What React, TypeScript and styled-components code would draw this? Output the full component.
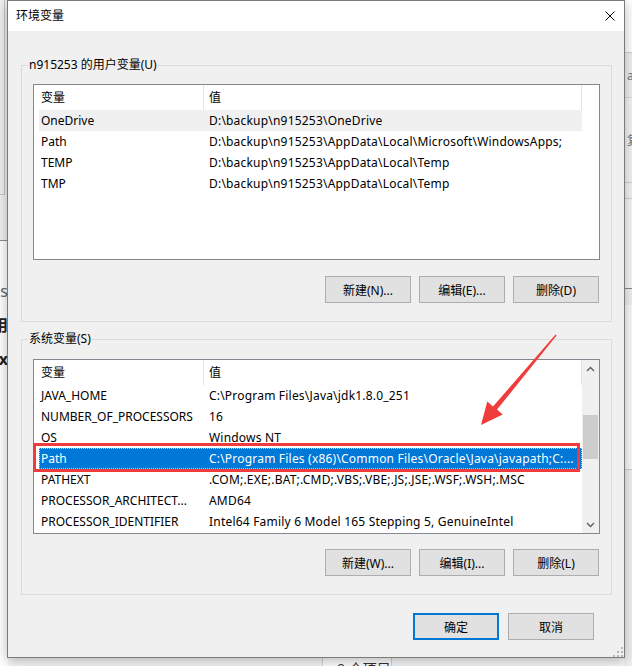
import React from 'react';
import styled, { createGlobalStyle, css } from 'styled-components';

const GlobalStyle = createGlobalStyle`
  html, body { margin: 0; padding: 0; background: #ffffff; }
  body {
    font-family: "Noto Sans", "Noto Sans CJK SC", sans-serif;
    font-size: 12px;
    color: #000;
  }
  * { box-sizing: border-box; }
`;

const Desktop = styled.div`
  position: relative;
  width: 632px;
  height: 666px;
  overflow: hidden;
  background: #f7f7f7;
`;

/* ---------- background windows (behind the dialog) ---------- */
const BackLeft = styled.div`
  position: absolute;
  left: 0;
  top: 0;
  width: 8px;
  height: 241px;
  background: #f0f0f0;
  border-bottom: 1px solid #8c8c8c;
`;
const BackLeftFrame = styled.div`
  width: 5px;
  height: 195px;
  border-right: 1px solid #c4c4c4;
  border-bottom: 1px solid #c4c4c4;
`;
const BackLeftText = styled.div`
  position: absolute;
  left: -30px;
  top: 241px;
  width: 38px;
  height: 425px;
  background: #ffffff;
  display: flex;
  flex-direction: column;
  align-items: flex-end;
  padding-top: 40px;
  gap: 14px;
`;
const BackGlyph = styled.span<{ $bold?: boolean }>`
  font-size: 16px;
  line-height: 20px;
  color: ${p => (p.$bold ? '#222' : '#666')};
  font-weight: ${p => (p.$bold ? 700 : 400)};
`;
const BackRight = styled.div`
  position: absolute;
  left: 624px;
  top: 0;
  width: 8px;
  height: 666px;
  display: flex;
  flex-direction: column;
  background: #f0f0f0;
`;
const BackBand = styled.div<{ $h: number; $bg: string; $line?: string }>`
  height: ${p => p.$h}px;
  background: ${p => p.$bg};
  border-bottom: 1px solid ${p => p.$line || 'transparent'};
  font-size: 12px;
  color: #777;
  padding-left: 3px;
  display: flex;
  align-items: center;
  overflow: hidden;
`;
const BackStatus = styled.div`
  position: absolute;
  left: 322px;
  top: 640px;
  width: 70px;
  height: 40px;
  background: #ffffff;
  border-left: 1px solid #d4d4d4;
  border-right: 1px solid #d4d4d4;
  padding: 21px 0 0 14px;
  font-size: 14px;
  line-height: 16px;
  color: #333;
  white-space: nowrap;
`;

/* ---------- dialog ---------- */
const Dialog = styled.div`
  position: absolute;
  left: 7px;
  top: 0;
  width: 618px;
  height: 658px;
  border: 1px solid #7a7a7a;
  background: #f0f0f0;
  box-shadow: 0 3px 12px rgba(0, 0, 0, 0.28);
  display: flex;
  flex-direction: column;
`;
const TitleBar = styled.div`
  height: 30px;
  flex: none;
  background: #ffffff;
  display: flex;
  align-items: center;
  justify-content: space-between;
  padding: 0 9px 0 8px;
`;
const Title = styled.span`
  font-size: 12px;
  line-height: 16px;
`;
const CloseIcon = styled.svg`
  width: 10px;
  height: 10px;
  display: block;
`;
const Body = styled.div`
  flex: 1;
  position: relative;
  display: flex;
  flex-direction: column;
  gap: 17px;
  padding: 34px 12px 16px 13px;
`;
const Group = styled.section<{ $pt: number }>`
  position: relative;
  border: 1px solid #dcdcdc;
  padding: ${p => p.$pt}px 11px 18px 11px;
  display: flex;
  flex-direction: column;
  gap: ${p => 34 - p.$pt}px;
`;
const GroupLabel = styled.span`
  position: absolute;
  top: -9px;
  left: 6px;
  padding: 0 1px;
  background: #f0f0f0;
  line-height: 16px;
  font-size: 12px;
`;
const List = styled.div<{ $h: number }>`
  position: relative;
  height: ${p => p.$h}px;
  border: 1px solid #828790;
  background: #ffffff;
  display: flex;
`;
const ListMain = styled.div`
  flex: 1;
  min-width: 0;
  display: flex;
  flex-direction: column;
`;
const Header = styled.div`
  height: 25px;
  flex: none;
  display: grid;
  grid-template-columns: 170px 1fr;
`;
const HeaderCell = styled.div<{ $pad: number }>`
  border-right: 1px solid #e5e5e5;
  padding-left: ${p => p.$pad}px;
  line-height: 25px;
`;
const Row = styled.div<{ $state?: 'hover' | 'selected' }>`
  position: relative;
  margin-left: 5px;
  height: 21px;
  line-height: 21px;
  display: grid;
  grid-template-columns: 170px 1fr;
  white-space: nowrap;
  ${p =>
    p.$state === 'hover' &&
    css`
      background: #f0f0f0;
    `}
  ${p =>
    p.$state === 'selected' &&
    css`
      background: #0078d7;
      color: #ffffff;
      outline: 1px dotted #f5c77e;
      outline-offset: -1px;
    `}
`;
const NameCell = styled.div`
  padding-left: 2px;
  overflow: hidden;
`;
const ValueCell = styled.div`
  overflow: hidden;
  letter-spacing: 0.2px;
`;
const ScrollGap = styled.div`
  width: 17px;
  flex: none;
`;
const ScrollBar = styled.div`
  width: 17px;
  flex: none;
  background: #f0f0f0;
  display: flex;
  flex-direction: column;
`;
const ScrollArrow = styled.div`
  height: 17px;
  flex: none;
  display: flex;
  align-items: center;
  justify-content: center;
`;
const ScrollTrack = styled.div`
  flex: 1;
  padding-top: 38px;
`;
const Thumb = styled.div`
  height: 44px;
  margin: 0 1px;
  background: #cdcdcd;
`;
const Annotation = styled.div`
  position: absolute;
  left: -1px;
  top: 83px;
  width: 547px;
  height: 29px;
  border: 3px solid #ef3b3b;
  pointer-events: none;
`;
const ButtonRow = styled.div<{ $pr: number }>`
  display: flex;
  justify-content: flex-end;
  gap: 8px;
  padding-right: ${p => p.$pr}px;
`;
const Footer = styled.div`
  display: flex;
  justify-content: flex-end;
  gap: 9px;
  padding-right: 18px;
  margin-top: 1px;
`;
const Button = styled.button<{ $primary?: boolean }>`
  width: 86px;
  height: 27px;
  margin: 0;
  padding: 0;
  font-family: inherit;
  font-size: 12px;
  color: #000;
  background: #e1e1e1;
  border: ${p => (p.$primary ? '2px solid #0078d7' : '1px solid #adadad')};
  border-radius: 0;
`;
const Grip = styled.svg`
  position: absolute;
  right: 1px;
  bottom: 0;
  width: 10px;
  height: 10px;
`;
const Overlay = styled.svg`
  position: absolute;
  left: 0;
  top: 0;
  width: 632px;
  height: 666px;
  pointer-events: none;
`;

type Item = { name: string; value: string; state?: 'hover' | 'selected' };

const userVars: Item[] = [
  { name: 'OneDrive', value: String.raw`D:\backup\n915253\OneDrive`, state: 'hover' },
  { name: 'Path', value: String.raw`D:\backup\n915253\AppData\Local\Microsoft\WindowsApps;` },
  { name: 'TEMP', value: String.raw`D:\backup\n915253\AppData\Local\Temp` },
  { name: 'TMP', value: String.raw`D:\backup\n915253\AppData\Local\Temp` },
];

const sysVars: Item[] = [
  { name: 'JAVA_HOME', value: String.raw`C:\Program Files\Java\jdk1.8.0_251` },
  { name: 'NUMBER_OF_PROCESSORS', value: '16' },
  { name: 'OS', value: 'Windows NT' },
  {
    name: 'Path',
    value: String.raw`C:\Program Files (x86)\Common Files\Oracle\Java\javapath;C:...`,
    state: 'selected',
  },
  { name: 'PATHEXT', value: '.COM;.EXE;.BAT;.CMD;.VBS;.VBE;.JS;.JSE;.WSF;.WSH;.MSC' },
  { name: 'PROCESSOR_ARCHITECT...', value: 'AMD64' },
  { name: 'PROCESSOR_IDENTIFIER', value: 'Intel64 Family 6 Model 165 Stepping 5, GenuineIntel' },
];

const Chevron = ({ up }: { up?: boolean }) => (
  <svg width="9" height="6" viewBox="0 0 9 6">
    <polyline
      points={up ? '1,5 4.5,1.5 8,5' : '1,1 4.5,4.5 8,1'}
      fill="none"
      stroke="#606060"
      strokeWidth="1.4"
    />
  </svg>
);

const VarList = ({ items, height, scroll, annotate }: { items: Item[]; height: number; scroll?: boolean; annotate?: boolean }) => (
  <List $h={height}>
    <ListMain>
      <Header>
        <HeaderCell $pad={7}>变量</HeaderCell>
        <HeaderCell $pad={5}>值</HeaderCell>
      </Header>
      {items.map(it => (
        <Row key={it.name + it.value} $state={it.state}>
          <NameCell>{it.name}</NameCell>
          <ValueCell>{it.value}</ValueCell>
        </Row>
      ))}
    </ListMain>
    {scroll ? (
      <ScrollBar>
        <ScrollArrow>
          <Chevron up />
        </ScrollArrow>
        <ScrollTrack>
          <Thumb />
        </ScrollTrack>
        <ScrollArrow>
          <Chevron />
        </ScrollArrow>
      </ScrollBar>
    ) : (
      <ScrollGap />
    )}
    {annotate && <Annotation />}
  </List>
);

export default function App() {
  return (
    <>
      <GlobalStyle />
      <Desktop>
        <BackLeft>
          <BackLeftFrame />
        </BackLeft>
        <BackLeftText>
          <BackGlyph>ls</BackGlyph>
          <BackGlyph $bold>用</BackGlyph>
          <BackGlyph $bold>x</BackGlyph>
        </BackLeftText>
        <BackRight>
          <BackBand $h={53} $bg="#ffffff" $line="#d0d0d0" />
          <BackBand $h={45} $bg="#f0f0f0" $line="#d8d8d8">a</BackBand>
          <BackBand $h={85} $bg="#f3f3f3" $line="#d0d0d0">复</BackBand>
          <BackBand $h={16} $bg="#f3f3f3" $line="#d0d0d0" />
          <BackBand $h={90} $bg="#f7f7f7" $line="#8a8a8a" />
          <BackBand $h={16} $bg="#f0f0f0" />
          <BackBand $h={165} $bg="#fafafa" $line="#d0d0d0" />
        </BackRight>
        <BackStatus>9 个项目</BackStatus>

        <Dialog>
          <TitleBar>
            <Title>环境变量</Title>
            <CloseIcon viewBox="0 0 10 10">
              <path d="M0.5 0.5 L9.5 9.5 M9.5 0.5 L0.5 9.5" stroke="#000" strokeWidth="1" fill="none" />
            </CloseIcon>
          </TitleBar>
          <Body>
            <Group $pt={18}>
              <GroupLabel>n915253 的用户变量(U)</GroupLabel>
              <VarList items={userVars} height={176} />
              <ButtonRow $pr={1}>
                <Button>新建(N)...</Button>
                <Button>编辑(E)...</Button>
                <Button>删除(D)</Button>
              </ButtonRow>
            </Group>
            <Group $pt={19}>
              <GroupLabel>系统变量(S)</GroupLabel>
              <VarList items={sysVars} height={175} scroll annotate />
              <ButtonRow $pr={1}>
                <Button>新建(W)...</Button>
                <Button>编辑(I)...</Button>
                <Button>删除(L)</Button>
              </ButtonRow>
            </Group>
            <Footer>
              <Button $primary>确定</Button>
              <Button>取消</Button>
            </Footer>
            <Grip viewBox="0 0 10 10">
              {[
                [8, 0],
                [8, 4],
                [4, 4],
                [8, 8],
                [4, 8],
                [0, 8],
              ].map(([x, y]) => (
                <rect key={`${x}-${y}`} x={x} y={y} width="2" height="2" fill="#b8b8b8" />
              ))}
            </Grip>
          </Body>
        </Dialog>

        <Overlay viewBox="0 0 632 666">
          <polygon
            points="556.6,335.4 497,409.6 502.7,414.4 481,425 487.3,401.6 493,406.4 555.6,334.6"
            fill="#f03c3c"
          />
        </Overlay>
      </Desktop>
    </>
  );
}
